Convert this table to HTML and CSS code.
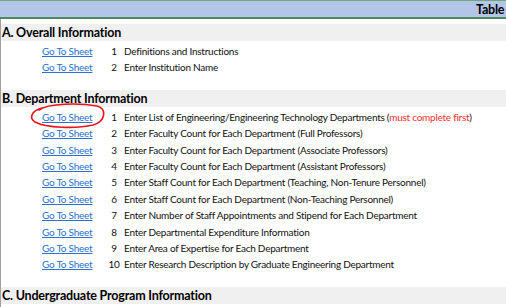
FILE: index.html
```html
<!DOCTYPE html>
<html lang="en">
<head>
    <meta charset="UTF-8">
    <title>Table of Contents</title>
    <link rel="stylesheet" href="styles.css">
</head>
<body>
  <div class="banner">
    <span class="banner-title">Table of Contents</span>
  </div>

  <div class="sheet">
    <section class="group">
      <h2 class="group-title">A. Overall Information</h2>
      <ul class="rows">
        <li class="row"><a class="sheet-link" href="#">Go To Sheet</a><span class="num">1</span><span class="desc">Definitions and Instructions</span></li>
        <li class="row"><a class="sheet-link" href="#">Go To Sheet</a><span class="num">2</span><span class="desc">Enter Institution Name</span></li>
      </ul>
    </section>

    <section class="group">
      <h2 class="group-title">B. Department Information</h2>
      <ul class="rows">
        <li class="row"><a class="sheet-link" href="#">Go To Sheet</a><span class="num">1</span><span class="desc">Enter List of Engineering/Engineering Technology Departments (<span class="warn">must complete first</span>)</span></li>
        <li class="row"><a class="sheet-link" href="#">Go To Sheet</a><span class="num">2</span><span class="desc">Enter Faculty Count for Each Department (Full Professors)</span></li>
        <li class="row"><a class="sheet-link" href="#">Go To Sheet</a><span class="num">3</span><span class="desc">Enter Faculty Count for Each Department (Associate Professors)</span></li>
        <li class="row"><a class="sheet-link" href="#">Go To Sheet</a><span class="num">4</span><span class="desc">Enter Faculty Count for Each Department (Assistant Professors)</span></li>
        <li class="row"><a class="sheet-link" href="#">Go To Sheet</a><span class="num">5</span><span class="desc">Enter Staff Count for Each Department (Teaching, Non-Tenure Personnel)</span></li>
        <li class="row"><a class="sheet-link" href="#">Go To Sheet</a><span class="num">6</span><span class="desc">Enter Staff Count for Each Department (Non-Teaching Personnel)</span></li>
        <li class="row"><a class="sheet-link" href="#">Go To Sheet</a><span class="num">7</span><span class="desc">Enter Number of Staff Appointments and Stipend for Each Department</span></li>
        <li class="row"><a class="sheet-link" href="#">Go To Sheet</a><span class="num">8</span><span class="desc">Enter Departmental Expenditure Information</span></li>
        <li class="row"><a class="sheet-link" href="#">Go To Sheet</a><span class="num">9</span><span class="desc">Enter Area of Expertise for Each Department</span></li>
        <li class="row"><a class="sheet-link" href="#">Go To Sheet</a><span class="num">10</span><span class="desc">Enter Research Description by Graduate Engineering Department</span></li>
      </ul>
    </section>

    <section class="group">
      <h2 class="group-title">C. Undergraduate Program Information</h2>
    </section>
  </div>

  <!-- hand drawn circle around the first department link -->
  <svg class="mark" width="506" height="307" viewBox="0 0 506 307">
    <path d="M39 110 C48 103 80 103 97 106 C107 109 106 121 93 125 C76 129 46 128 35 122 C29 118 31 111 42 108" />
  </svg>
</body>
</html>
```

FILE: styles.css
```css
body {
    margin: 0;
    font-family: 'Lato', 'Liberation Sans', sans-serif;
    font-size: 10px;
    letter-spacing: -0.25px;
    color: #111;
    background: #fff;
    overflow: hidden;
    position: relative;
    height: 100vh;
    display: flex;
    flex-direction: column;
}
.banner {
    flex: none;
    height: 16px;
    background: #b4c6e7;
    border-top: 1px solid #6fa77c;
    border-bottom: 2px solid #4f8a5e;
    white-space: nowrap;
    overflow: hidden;
}
.banner-title {
    display: block;
    padding-left: 476px;
    font-weight: 700;
    font-size: 12.5px;
    letter-spacing: -0.2px;
    line-height: 17px;
    color: #000;
}
.sheet {
    flex: 1;
    min-height: 0;
    overflow: hidden;
    border-left: 1px solid #a0a0a0;
    padding-top: 5px;
}
.group-title {
    margin: 0;
    height: 17px;
    padding-left: 1px;
    background: #f0f0f0;
    font-size: 12.5px;
    font-weight: 700;
    letter-spacing: -0.2px;
    line-height: 18px;
    color: #000;
}
.rows {
    list-style: none;
    margin: 0 0 14px;
    padding: 2px 0 0;
}
.row {
    display: grid;
    grid-template-columns: 62px 20px 1fr;
    padding-left: 41px;
    line-height: 16.4px;
    white-space: nowrap;
}
.sheet-link {
    color: #2a6fd1;
    text-decoration: underline;
}
.num {
    text-align: center;
}
.warn {
    color: #ff2d2d;
}
.mark {
    position: absolute;
    left: 0;
    top: 0;
    pointer-events: none;
}
.mark path {
    fill: none;
    stroke: #e8141b;
    stroke-width: 1.6;
    stroke-linecap: round;
}
```
